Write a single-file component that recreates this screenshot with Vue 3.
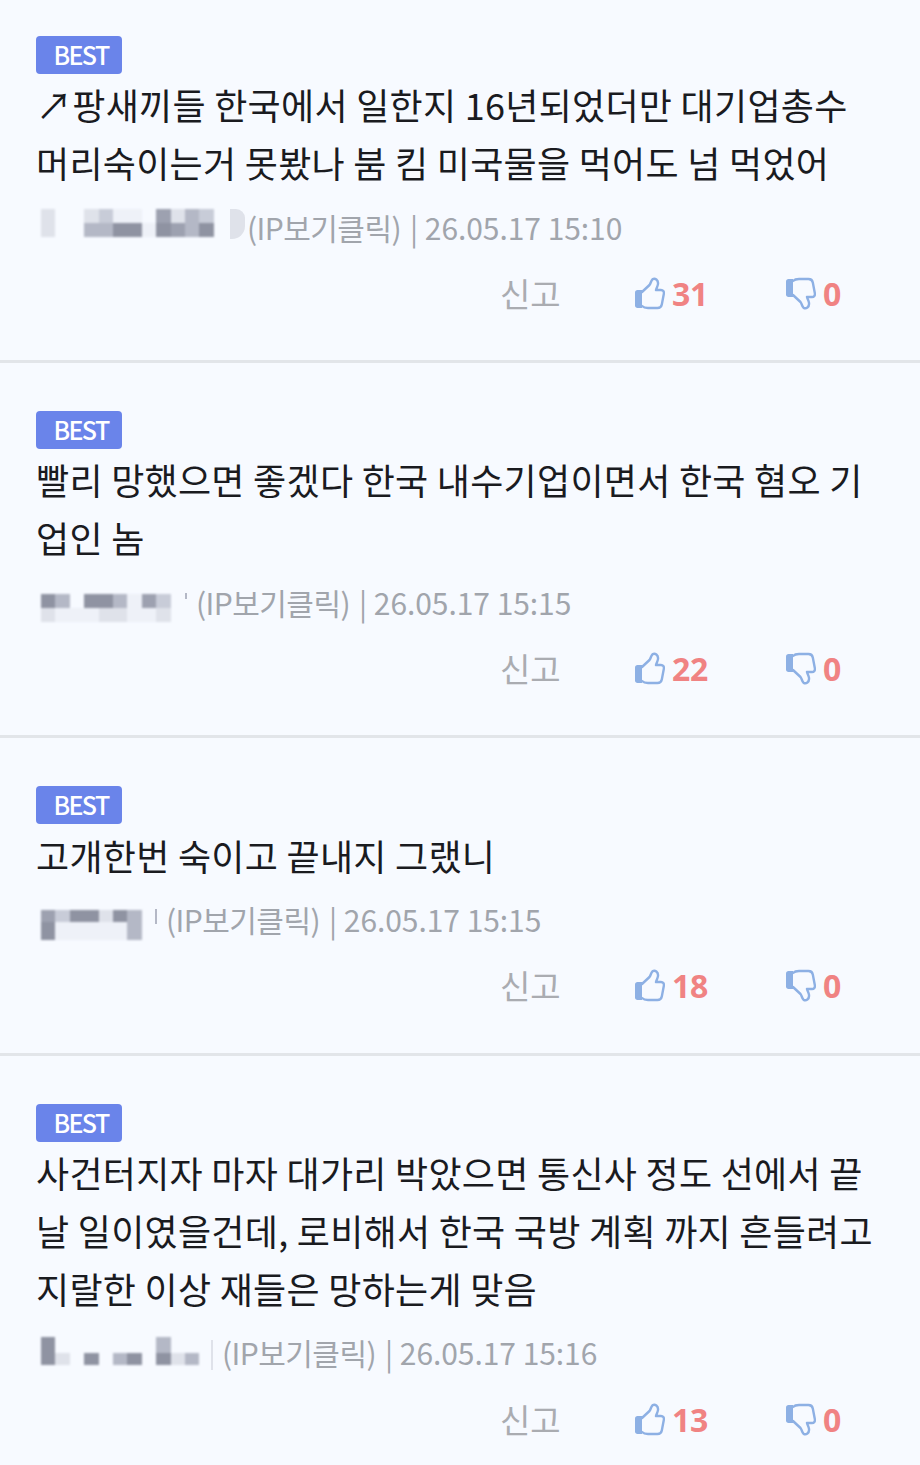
<script setup>
// 모자이크 셀: null 이면 빈칸
const a = '#8f93a2'
const b = '#9da1b0'
const c = '#b4b8c6'
const d = '#c8ccd8'
const e = '#dfe2ea'
const f = '#eef1f8'

const comments = [
  {
    id: 1,
    lines: ['↗팡새끼들 한국에서 일한지 16년되었더만 대기업총수', '머리숙이는거 못봤나 붐 킴 미국물을 먹어도 넘 먹었어'],
    date: '26.05.17 15:10',
    likes: 31,
    dislikes: 0,
    mosaicWidth: 206,
    mosaicTop: -2,
    rows: [
      { h: 14, cells: [e, null, null, e, d, f, f, null, b, e, c, d] },
      { h: 14, cells: [e, null, null, c, c, a, a, f, a, b, c, a] }
    ],
    mark: 'blob'
  },
  {
    id: 2,
    lines: ['빨리 망했으면 좋겠다 한국 내수기업이면서 한국 혐오 기', '업인 놈'],
    date: '26.05.17 15:15',
    likes: 22,
    dislikes: 0,
    mosaicWidth: 155,
    mosaicTop: 8,
    rows: [
      { h: 14, cells: [a, c, null, a, a, c, f, b, d] },
      { h: 14, cells: [e, f, f, f, e, e, f, f, e] }
    ],
    mark: 'tick'
  },
  {
    id: 3,
    lines: ['고개한번 숙이고 끝내지 그랬니'],
    date: '26.05.17 15:15',
    likes: 18,
    dislikes: 0,
    mosaicWidth: 125,
    mosaicTop: 7,
    rows: [
      { h: 12, cells: [b, d, a, a, e, a, c] },
      { h: 18, cells: [a, f, f, f, f, f, c] }
    ],
    mark: 'stroke'
  },
  {
    id: 4,
    lines: ['사건터지자 마자 대가리 박았으면 통신사 정도 선에서 끝', '날 일이였을건데, 로비해서 한국 국방 계획 까지 흔들려고', '지랄한 이상 재들은 망하는게 맞음'],
    date: '26.05.17 15:16',
    likes: 13,
    dislikes: 0,
    mosaicWidth: 181,
    mosaicTop: 1,
    rows: [
      { h: 16, cells: [a, null, null, null, null, null, null, null, c, null, null] },
      { h: 12, cells: [a, e, null, a, null, c, a, null, a, e, c] }
    ],
    mark: 'stroke long'
  }
]
</script>

<template>
  <section class="list">
    <article v-for="item in comments" :key="item.id" class="comment">
      <span class="badge">BEST</span>
      <p class="body">
        <span v-for="line in item.lines" :key="line" class="line">{{ line }}</span>
      </p>
      <div class="meta">
        <span class="mosaic" :style="{ width: item.mosaicWidth + 'px', top: item.mosaicTop + 'px' }">
          <span class="mosaic-cells">
            <span v-for="(row, r) in item.rows" :key="r" class="mosaic-row" :style="{ height: row.h + 'px' }">
              <i v-for="(cell, n) in row.cells" :key="n" :style="{ background: cell || 'transparent' }"></i>
            </span>
          </span>
          <span class="mark" :class="item.mark"></span>
        </span>
        <span class="ip">(IP보기클릭)</span>
        <span class="date">| {{ item.date }}</span>
      </div>
      <div class="actions">
        <span class="report">신고</span>
        <span class="vote">
          <svg width="31" height="33" viewBox="0 0 31 33">
            <path class="cuff" d="M1 15.500C1 14 2 13 3.500 13H8V31H3.500C2 31 1 30 1 28.500Z" />
            <path class="hand" d="M8 15L15.500 8C16.800 6.500 16.800 4 18.500 2.300C21 0.500 24.500 3 24 7C23.800 9 22.500 11 22 13H27C29 13 30.300 14.500 29.800 17L27.800 27.500C27.300 30 25.500 31 23.500 31H14C11.500 31 9.500 30.500 8 29" />
          </svg>
          <b>{{ item.likes }}</b>
        </span>
        <span class="vote">
          <svg class="down" width="31" height="33" viewBox="0 0 31 33">
            <path class="cuff" d="M1 15.500C1 14 2 13 3.500 13H8V31H3.500C2 31 1 30 1 28.500Z" />
            <path class="hand" d="M8 15L15.500 8C16.800 6.500 16.800 4 18.500 2.300C21 0.500 24.500 3 24 7C23.800 9 22.500 11 22 13H27C29 13 30.300 14.500 29.800 17L27.800 27.500C27.300 30 25.500 31 23.500 31H14C11.500 31 9.500 30.500 8 29" />
          </svg>
          <b>{{ item.dislikes }}</b>
        </span>
      </div>
    </article>
  </section>
</template>

<style scoped>
.list {
  width: 920px;
  height: 1465px;
  overflow: hidden;
  background: #f7faff;
  font-family: "Noto Sans CJK KR", "Noto Sans", sans-serif;
}

.comment {
  box-sizing: border-box;
  padding: 48px 36px 0;
  height: 375px;
  border-bottom: 3px solid #e2e5e9;
}

.comment:first-child {
  padding-top: 36px;
  height: 363px;
}

.comment:nth-child(3) {
  height: 318px;
}

.comment:nth-child(3) .body {
  margin-top: 2px;
}

.comment:nth-child(3) .meta,
.comment:last-child .meta {
  margin-top: 12px;
}

.comment:last-child .actions {
  margin-top: 20px;
}

.comment:last-child {
  border-bottom: 0;
  height: 411px;
}

.badge {
  display: flex;
  align-items: center;
  justify-content: center;
  box-sizing: border-box;
  width: 86px;
  height: 38px;
  padding: 0 0 3px 4px;
  border-radius: 4px;
  background: #6a84ea;
  color: #fff;
  font-size: 25px;
  font-weight: 500;
  letter-spacing: -1.6px;
}

.body {
  margin: 1px 0 0;
  font-size: 36px;
  line-height: 58px;
  color: #1a1b1f;
  letter-spacing: 0.28px;
}

.line {
  display: block;
  white-space: nowrap;
}

.meta {
  display: flex;
  align-items: center;
  height: 46px;
  margin-top: 13px;
  padding-left: 5px;
  font-size: 30px;
  color: #a1a5ac;
  white-space: nowrap;
}

.mosaic {
  position: relative;
  display: block;
  flex: none;
  height: 32px;
}

.mosaic-cells {
  display: block;
  filter: blur(1.1px);
}

.mosaic-row {
  display: flex;
}

.mosaic-row i {
  display: block;
  width: 14.4px;
  height: 100%;
}

.mark {
  position: absolute;
}

.blob {
  right: 2px;
  top: 0;
  width: 15px;
  height: 30px;
  border-radius: 0 9px 13px 0;
  background: #dfe2ea;
  filter: blur(0.6px);
}

.tick {
  right: 9px;
  top: -1px;
  width: 2px;
  height: 6px;
  background: #b4b8c6;
}

.stroke {
  right: 9px;
  top: -1px;
  width: 2px;
  height: 15px;
  background: #b4b8c6;
}

.long {
  top: 3px;
  height: 30px;
  background: #dfe2ea;
}

.ip {
  letter-spacing: -0.55px;
}

.date {
  margin-left: 9px;
  letter-spacing: -0.05px;
}

.actions {
  display: grid;
  grid-template-columns: 135px 151px 134px;
  justify-content: end;
  align-items: center;
  height: 46px;
  margin: 19px -36px 0 0;
}

.report {
  font-size: 33px;
  color: #aaacb1;
}

.vote {
  display: flex;
  align-items: center;
  gap: 7px;
}

.vote svg {
  margin-left: -1px;
}

.vote b {
  font-family: "Noto Sans", sans-serif;
  font-size: 32px;
  font-weight: 700;
  letter-spacing: -0.3px;
  color: #f08383;
}

.cuff {
  fill: #8db0e4;
}

.hand {
  fill: none;
  stroke: #8db0e4;
  stroke-width: 2.4;
  stroke-linejoin: round;
  stroke-linecap: round;
}

.down {
  transform: scaleY(-1);
}
</style>
